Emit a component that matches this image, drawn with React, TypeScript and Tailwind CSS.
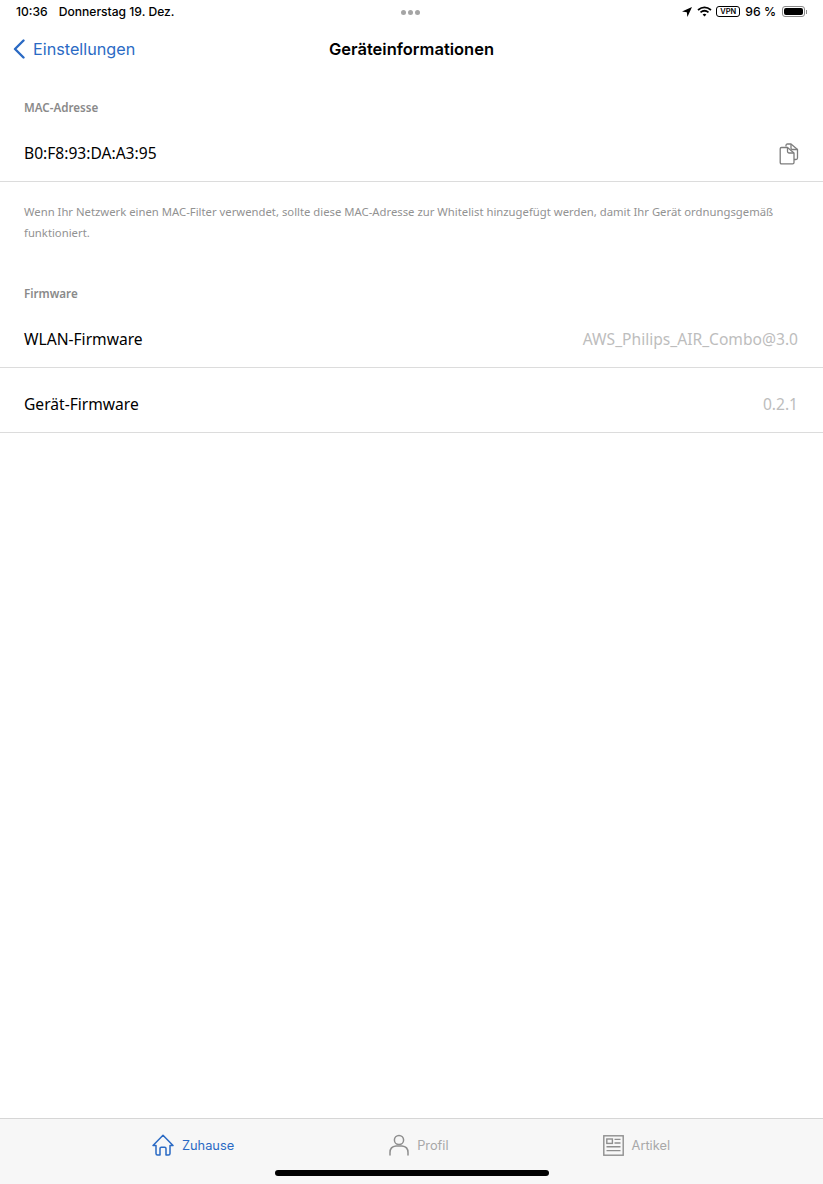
const sfStack = "font-['Inter','Liberation_Sans',sans-serif]";

function CopyIcon() {
  return (
    <svg width="20" height="22" viewBox="0 0 20 22" fill="none" stroke="#7d7d7d" strokeWidth="1.3" strokeLinejoin="round">
      <path d="M7 3.5 V2.5 Q7 1 8.5 1 H12 L18.5 6.5 V15 Q18.5 16.5 17 16.5 H15" />
      <path d="M12 1 V5 Q12 6.5 13.5 6.5 H18.5" />
      <path d="M2.5 4.5 H8.5 L15 10 V19.5 Q15 20.8 13.6 20.8 H2.5 Q1.2 20.8 1.2 19.5 V5.8 Q1.2 4.5 2.5 4.5 Z" />
      <path d="M8.5 4.5 V8.6 Q8.5 10 10 10 H15" />
    </svg>
  );
}

function HomeIcon() {
  return (
    <svg width="22" height="22" viewBox="0 0 22 22" fill="none" stroke="#2a6ac4" strokeWidth="1.5" strokeLinejoin="round" strokeLinecap="round">
      <path d="M1 11.5 L11 1.2 L21 11.5 H18 V19.5 Q18 21 16.5 21 H14 V14.5 Q14 13.2 12.7 13.2 H9.3 Q8 13.2 8 14.5 V21 H5.5 Q4 21 4 19.5 V11.5 Z" />
    </svg>
  );
}

function PersonIcon() {
  return (
    <svg width="20" height="22" viewBox="0 0 20 22" fill="none" stroke="#8e8e8e" strokeWidth="1.5" strokeLinecap="round">
      <circle cx="10" cy="6" r="4.6" />
      <path d="M1 21 V18.5 Q1 12.5 7 12 H13 Q19 12.5 19 18.5 V21" />
    </svg>
  );
}

function ArticleIcon() {
  return (
    <svg width="21" height="21" viewBox="0 0 21 21" fill="none" stroke="#8e8e8e" strokeWidth="1.4">
      <rect x="0.8" y="0.8" width="19.4" height="19.4" />
      <rect x="3.8" y="4" width="5.6" height="4.4" />
      <path d="M11.5 4.4 H17.5 M11.5 8 H17.5 M3.5 11.8 H17.5 M3.5 15.6 H17.5" />
    </svg>
  );
}

function StatusIcons() {
  return (
    <div className="flex items-center text-[12.2px] font-medium text-black">
      <svg width="10" height="10" viewBox="0 0 10 10" fill="#000">
        <path d="M10 0 L0 4.6 L4.8 5.2 L5.4 10 Z" />
      </svg>
      <svg className="ml-[5px]" width="15" height="11" viewBox="0 0 15 11" fill="none" stroke="#000" strokeWidth="1.8">
        <path d="M1 4 Q7.5 -1.2 14 4" />
        <path d="M3.5 6.4 Q7.5 3.2 11.5 6.4" />
        <path d="M7.5 10.6 L5.6 8.4 Q7.5 7 9.4 8.4 Z" fill="#000" stroke="none" />
      </svg>
      <span className="ml-[4px] flex h-[11px] w-[24px] items-center justify-center rounded-[3px] border border-black text-[7.5px] font-semibold leading-none">
        VPN
      </span>
      <span className="ml-[5px]">96 %</span>
      <div className="ml-[6px] flex items-center">
        <div className="h-[11px] w-[23px] rounded-[3px] border border-[#8a8a8a] p-[1px]">
          <div className="h-full w-full rounded-[2px] bg-black" />
        </div>
        <div className="ml-[1px] h-[4px] w-[1px] bg-[#8a8a8a]" />
      </div>
    </div>
  );
}

function InfoRow({ label, value }: { label: string; value?: string }) {
  return (
    <div className="flex h-[65px] items-center justify-between border-b border-[#dcdcdc] pl-6 pr-[25px] pt-[10px]">
      <span className="text-[15.6px] text-black">{label}</span>
      {value && <span className="text-[15.6px] text-[#bdbdbd]">{value}</span>}
    </div>
  );
}

function TabItem({ icon, label, active }: { icon: React.ReactNode; label: string; active?: boolean }) {
  return (
    <div className="flex items-center gap-[8px]">
      {icon}
      <span className={`${sfStack} pt-[2px] text-[12.8px] ${active ? "text-[#2a6ac4]" : "text-[#a8a8a8]"}`}>{label}</span>
    </div>
  );
}

export default function App() {
  return (
    <div className="flex h-[1184px] w-[823px] flex-col overflow-hidden bg-white font-['Noto_Sans',sans-serif]">
      <div className={`relative flex h-[24px] items-center justify-between pl-4 pr-[16px] ${sfStack}`}>
        <div className="flex gap-[11px] text-[12.1px] font-medium text-black">
          <span>10:36</span>
          <span>Donnerstag 19. Dez.</span>
        </div>
        <div className="absolute left-[401px] top-[10px] flex gap-[2px]">
          <div className="h-[5px] w-[5px] rounded-full bg-[#a5a5a5]" />
          <div className="h-[5px] w-[5px] rounded-full bg-[#a5a5a5]" />
          <div className="h-[5px] w-[5px] rounded-full bg-[#a5a5a5]" />
        </div>
        <StatusIcons />
      </div>

      <div className={`relative flex h-[50px] items-center justify-center ${sfStack}`}>
        <div className="absolute left-[13px] top-[13px] flex items-center gap-[8px] text-[#2a6ac4]">
          <svg width="12" height="20" viewBox="0 0 12 20" fill="none" stroke="#2a6ac4" strokeWidth="2.4" strokeLinecap="round" strokeLinejoin="round">
            <path d="M10.5 1.5 L2 10 L10.5 18.5" />
          </svg>
          <span className="text-[16.2px]">Einstellungen</span>
        </div>
        <span className="text-[16.5px] font-semibold text-black">Geräteinformationen</span>
      </div>

      <div className="px-6 pt-[26px] text-[11.6px] font-semibold leading-[16px] text-[#8a8a8a]">MAC-Adresse</div>

      <div className="flex h-[66px] items-center justify-between border-b border-[#dcdcdc] pl-6 pr-[24px] pt-[11px]">
        <span className="text-[15.6px] text-black">B0:F8:93:DA:A3:95</span>
        <CopyIcon />
      </div>

      <p className="mt-[19px] px-6 text-[11.3px] leading-[21px] text-[#929292]">
        Wenn Ihr Netzwerk einen MAC-Filter verwendet, sollte diese MAC-Adresse zur Whitelist hinzugefügt werden, damit Ihr Gerät ordnungsgemäß funktioniert.
      </p>

      <div className="px-6 pt-[43px] text-[11.6px] font-semibold leading-[16px] text-[#8a8a8a]">Firmware</div>

      <div className="mt-[1px]">
        <InfoRow label="WLAN-Firmware" value="AWS_Philips_AIR_Combo@3.0" />
        <InfoRow label="Gerät-Firmware" value="0.2.1" />
      </div>

      <div className="flex-1" />

      <div className="relative flex h-[66px] items-start border-t border-[#d6d6d6] bg-[#f7f7f7] pt-[15px]">
        <div className="flex w-full items-center">
          <div className="ml-[152px]">
            <TabItem active label="Zuhause" icon={<HomeIcon />} />
          </div>
          <div className="ml-[155px]">
            <TabItem label="Profil" icon={<PersonIcon />} />
          </div>
          <div className="ml-[154px]">
            <TabItem label="Artikel" icon={<ArticleIcon />} />
          </div>
        </div>
        <div className="absolute bottom-[8px] left-[275px] h-[6px] w-[274px] rounded-full bg-black" />
      </div>
    </div>
  );
}
